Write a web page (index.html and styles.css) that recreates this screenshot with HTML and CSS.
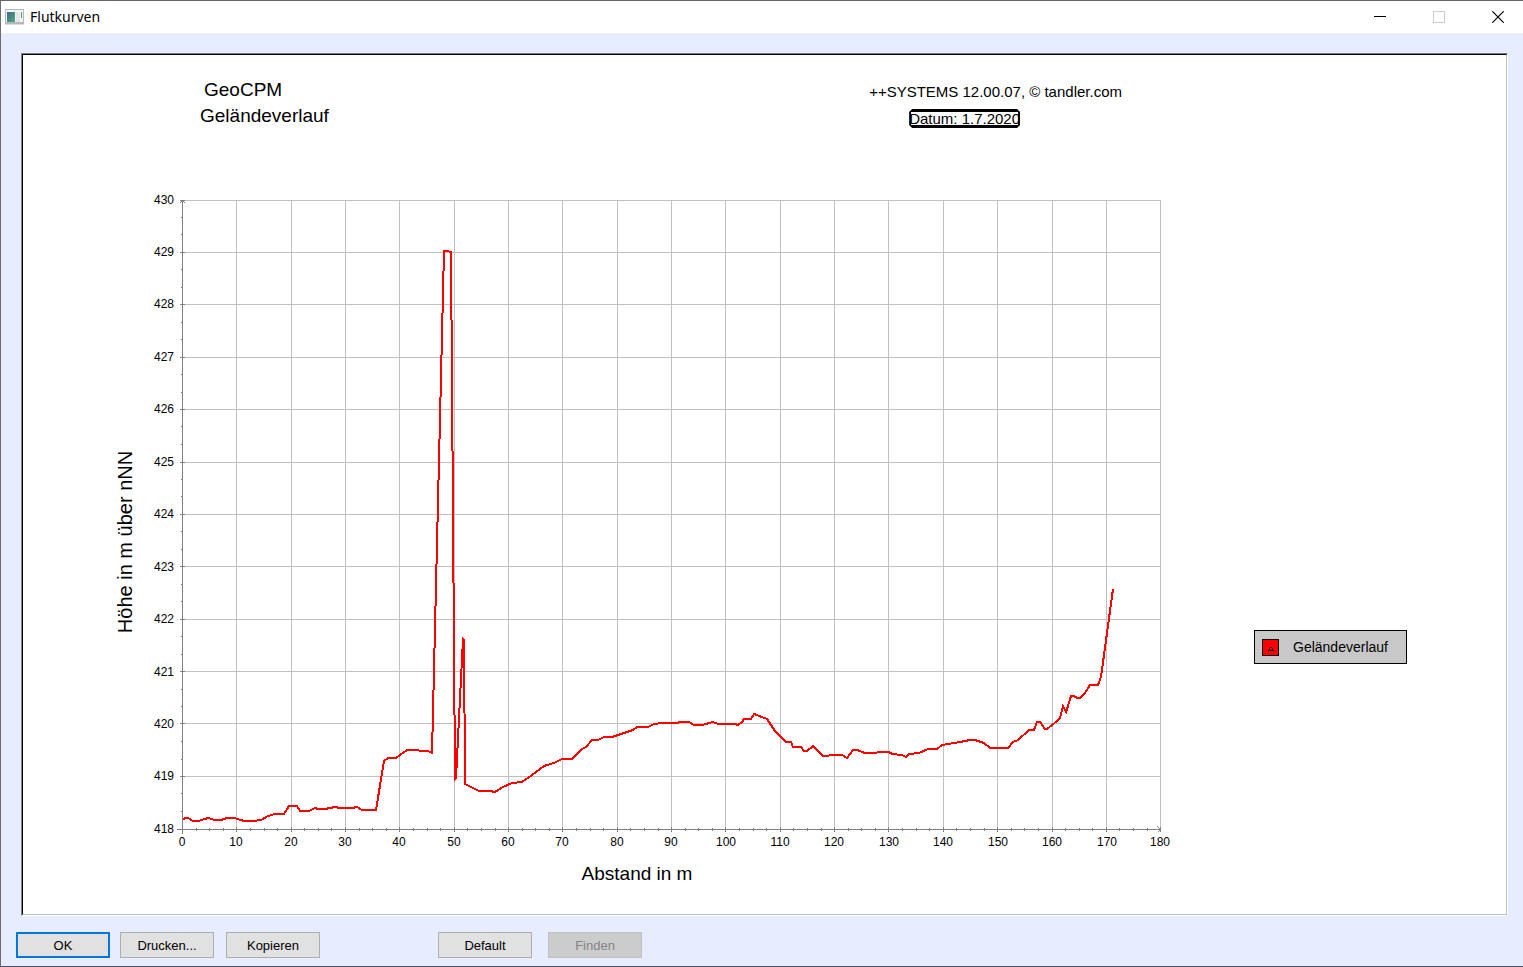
FILE: index.html
```html
<!DOCTYPE html>
<html lang="de">
<head>
<meta charset="utf-8">
<title>Flutkurven</title>
<link rel="stylesheet" href="styles.css">
</head>
<body>
<div class="window">
  <header class="titlebar">
    <svg class="app-icon" width="20" height="16" viewBox="0 0 20 16" aria-hidden="true">
      <defs>
        <linearGradient id="screen" x1="0" y1="0" x2="1" y2="1">
          <stop offset="0" stop-color="#3c6b94"/>
          <stop offset="1" stop-color="#4fa878"/>
        </linearGradient>
      </defs>
      <rect x="0" y="0" width="19" height="15" fill="#b4b8bd"/>
      <rect x="1" y="1" width="17" height="12" fill="#f4f5f6"/>
      <rect x="2" y="3" width="8" height="10" fill="url(#screen)"/>
      <rect x="11" y="3" width="4" height="10" fill="#e4e6e8"/>
      <rect x="16" y="3" width="1" height="6" fill="#4f9a80"/>
      <rect x="0" y="15" width="19" height="1" fill="#dcdcde"/>
    </svg>
    <h1 class="title">Flutkurven</h1>
    <div class="window-controls">
      <button class="control" type="button" aria-label="Minimieren">
        <svg width="12" height="12" viewBox="0 0 12 12"><rect x="0" y="5" width="12" height="1" fill="#000"/></svg>
      </button>
      <button class="control" type="button" aria-label="Maximieren" disabled>
        <svg width="12" height="12" viewBox="0 0 12 12"><rect x="0.5" y="0.5" width="11" height="11" fill="none" stroke="#ccc"/></svg>
      </button>
      <button class="control" type="button" aria-label="Schließen">
        <svg width="12" height="12" viewBox="0 0 12 12"><path d="M0.3 0.3 11.7 11.7M11.7 0.3 0.3 11.7" stroke="#000" stroke-width="1.2"/></svg>
      </button>
    </div>
  </header>

  <main class="paper">
    <div class="sheet">
      <div class="sheet-head">
        <div class="heading">
          <p class="product">GeoCPM</p>
          <h2 class="subject">Geländeverlauf</h2>
        </div>
        <div class="imprint">
          <p>++SYSTEMS 12.00.07, © tandler.com</p>
          <p class="date">Datum: 1.7.2020</p>
        </div>
      </div>
      <div class="sheet-body">
        <svg class="chart" viewBox="103 180 1087 710" role="img" aria-label="Geländeverlauf: Höhe über Abstand">
          <path class="grid" d="M183 200.5H1161M183 252.5H1161M183 304.5H1161M183 357.5H1161M183 409.5H1161M183 462.5H1161M183 514.5H1161M183 566.5H1161M183 619.5H1161M183 671.5H1161M183 723.5H1161M183 776.5H1161
            M236.5 200V829M291.5 200V829M345.5 200V829M399.5 200V829M454.5 200V829M508.5 200V829M562.5 200V829M617.5 200V829M671.5 200V829M725.5 200V829M780.5 200V829M834.5 200V829M888.5 200V829M943.5 200V829M997.5 200V829M1052.5 200V829M1106.5 200V829M1160.5 200V829"/>
          <path class="axis" d="M182.5 200V834M177 829.5H1161
            M180 200.5h5M180 252.5h5M180 304.5h5M180 357.5h5M180 409.5h5M180 462.5h5M180 514.5h5M180 566.5h5M180 619.5h5M180 671.5h5M180 723.5h5M180 776.5h5
            M181 217.5h2M181 234.5h2M181 269.5h2M181 287.5h2M181 322.5h2M181 339.5h2M181 374.5h2M181 392.5h2M181 426.5h2M181 444.5h2M181 479.5h2M181 496.5h2M181 531.5h2M181 549.5h2M181 584.5h2M181 601.5h2M181 636.5h2M181 654.5h2M181 689.5h2M181 706.5h2M181 741.5h2M181 759.5h2M181 793.5h2M181 811.5h2
            M236.5 827v5M291.5 827v5M345.5 827v5M399.5 827v5M454.5 827v5M508.5 827v5M562.5 827v5M617.5 827v5M671.5 827v5M725.5 827v5M780.5 827v5M834.5 827v5M888.5 827v5M943.5 827v5M997.5 827v5M1052.5 827v5M1106.5 827v5M1160.5 827v5
            M196.5 828v3M209.5 828v3M223.5 828v3M250.5 828v3M264.5 828v3M277.5 828v3M304.5 828v3M318.5 828v3M331.5 828v3M359.5 828v3M372.5 828v3M386.5 828v3M413.5 828v3M427.5 828v3M440.5 828v3M467.5 828v3M481.5 828v3M495.5 828v3M522.5 828v3M535.5 828v3M549.5 828v3M576.5 828v3M590.5 828v3M603.5 828v3M630.5 828v3M644.5 828v3M658.5 828v3M685.5 828v3M698.5 828v3M712.5 828v3M739.5 828v3M753.5 828v3M766.5 828v3M793.5 828v3M807.5 828v3M821.5 828v3M848.5 828v3M861.5 828v3M875.5 828v3M902.5 828v3M916.5 828v3M929.5 828v3M956.5 828v3M970.5 828v3M984.5 828v3M1011.5 828v3M1024.5 828v3M1038.5 828v3M1065.5 828v3M1079.5 828v3M1092.5 828v3M1119.5 828v3M1133.5 828v3M1147.5 828v3
            M179.5 203.5l3-3l3 3M1157.5 826.5l3 3l-3 3"/>
          <polyline class="curve" points="183,819 186,818 188,818 193,821 199,821 204,819 209,818 214,820 221,820 227,818 235,818 240,820 245,821 253,821 261,820 268,816 275,814 284,814 289,806 297,806 300,811 309,811 315,808 318,809 325,809 335,807 340,808 352,808 357,807 362,810 376,810 384,761 388,758 396,758 407,750 418,750 420,751 428,751 430,752 432,753 444,251 447,251 451,252 455,779 456,778 463,639 464,640 465,784 473,788 479,791 490,791 495,792 503,787 512,783 522,782 532,775 544,766 554,763 562,759 572,759 582,749 586,747 592,740 598,740 604,737 612,737 627,732 633,730 637,727 648,727 654,724 663,723 677,723 680,722 689,722 694,725 702,725 713,722 718,724 735,724 738,725 742,722 744,719 751,719 754,714 767,719 775,731 786,742 791,742 793,747 801,747 804,751 807,751 813,746 823,756 828,756 830,755 842,755 847,758 853,750 857,750 865,753 876,753 878,752 889,752 892,754 902,755 906,757 909,754 919,753 928,749 937,749 942,745 960,742 970,740 975,740 984,743 990,748 1008,748 1013,742 1018,740 1029,730 1034,730 1037,722 1040,722 1045,729 1047,729 1057,721 1060,718 1063,706 1066,712 1068,706 1071,696 1074,696 1077,698 1080,698 1085,693 1090,685 1098,685 1101,677 1113,589"/>
          <g class="labels labels-y">
            <text x="174" y="204">430</text><text x="174" y="256">429</text><text x="174" y="308">428</text><text x="174" y="361">427</text><text x="174" y="413">426</text><text x="174" y="466">425</text><text x="174" y="518">424</text><text x="174" y="571">423</text><text x="174" y="623">422</text><text x="174" y="676">421</text><text x="174" y="728">420</text><text x="174" y="780">419</text><text x="174" y="833">418</text>
          </g>
          <g class="labels labels-x">
            <text x="182" y="846">0</text><text x="236" y="846">10</text><text x="291" y="846">20</text><text x="345" y="846">30</text><text x="399" y="846">40</text><text x="454" y="846">50</text><text x="508" y="846">60</text><text x="562" y="846">70</text><text x="617" y="846">80</text><text x="671" y="846">90</text><text x="726" y="846">100</text><text x="780" y="846">110</text><text x="834" y="846">120</text><text x="889" y="846">130</text><text x="943" y="846">140</text><text x="998" y="846">150</text><text x="1052" y="846">160</text><text x="1107" y="846">170</text><text x="1160" y="846">180</text>
          </g>
          <text class="axis-title" x="637" y="880">Abstand in m</text>
          <text class="axis-title axis-title-y" transform="translate(132 542) rotate(-90)">Höhe in m über nNN</text>
        </svg>
        <div class="legend">
          <svg class="legend-key" width="17" height="17" viewBox="0 0 17 17" aria-hidden="true">
            <rect x="0.5" y="0.5" width="16" height="16" fill="#f00" stroke="#000"/>
            <path d="M6 11h6v1H6zM7 9h1v2H7zM10 9h1v2h-1zM8 8h2v1H8z" fill="#000"/>
          </svg>
          <span>Geländeverlauf</span>
        </div>
      </div>
    </div>
  </main>

  <footer class="actions">
    <button class="btn btn-primary" type="button">OK</button>
    <button class="btn" type="button">Drucken...</button>
    <button class="btn btn-copy" type="button">Kopieren</button>
    <button class="btn btn-default" type="button">Default</button>
    <button class="btn btn-find" type="button" disabled>Finden</button>
  </footer>
</div>
</body>
</html>
```

FILE: styles.css
```css
* {
  box-sizing: border-box;
}

body {
  margin: 0;
  font-family: "Liberation Sans", Arial, sans-serif;
  color: #000;
}

h1,
h2,
p {
  margin: 0;
  font-weight: 400;
}

.window {
  display: flex;
  flex-direction: column;
  min-height: 100vh;
  border-top: 1px solid #666;
  border-left: 1px solid #6c6c70;
  border-bottom: 1px solid #50506a;
  background: #e7edfe;
}

.titlebar {
  display: flex;
  align-items: center;
  height: 32px;
  padding-left: 4px;
  background: #fff;
}

.title {
  margin-left: 5px;
  font-family: "Noto Sans", sans-serif;
  font-size: 14px;
  line-height: 20px;
}

.window-controls {
  display: flex;
  gap: 9px;
  height: 100%;
  margin-left: auto;
}

.control {
  display: flex;
  align-items: center;
  justify-content: center;
  width: 50px;
  padding: 0;
  border: 0;
  background: transparent;
}

/* Sunken frame: dark on the top left, light on the bottom right */
.paper {
  display: flex;
  flex: 1;
  margin: 20px 15px 0 20px;
  border: 1px solid;
  border-color: #808080 #fff #fff #808080;
}

.sheet {
  flex: 1;
  border: 1px solid;
  border-color: #000 #c0c0c0 #c0c0c0 #000;
  background: #fff;
}

.sheet-head {
  display: flex;
  justify-content: space-between;
  height: 125px;
  padding: 22px 384px 0 177px;
}

.heading {
  font-size: 19px;
  line-height: 26px;
}

.product {
  padding-left: 4px;
}

.subject {
  font-size: 19px;
}

.imprint {
  padding-top: 1px;
  font-size: 15px;
  line-height: 27px;
}

.date {
  position: relative;
  width: max-content;
  margin-left: 40px;
}

/* Selection frame drawn over the text, with clipped corners */
.date::before {
  content: "";
  position: absolute;
  inset: 4px 0;
  border: solid #000;
  border-width: 3px 2px;
  clip-path: polygon(3px 0, calc(100% - 3px) 0, 100% 3px, 100% calc(100% - 3px), calc(100% - 3px) 100%, 3px 100%, 0 calc(100% - 3px), 0 3px);
}

.sheet-body {
  display: flex;
  align-items: flex-start;
  gap: 64px;
  padding: 0 99px 0 80px;
}

.chart {
  display: block;
  flex: 1;
  min-width: 0;
  height: auto;
}

.grid,
.axis,
.curve {
  fill: none;
  shape-rendering: crispEdges;
}

.grid {
  stroke: #c0c0c0;
}

.axis {
  stroke: #808080;
}

.curve {
  stroke: #f00;
  stroke-width: 2px;
}

.labels {
  font-size: 12px;
}

.labels-y {
  text-anchor: end;
}

.labels-x,
.axis-title {
  text-anchor: middle;
}

.axis-title {
  font-size: 19px;
}

.axis-title-y {
  font-size: 20px;
}

.legend {
  display: flex;
  flex: none;
  align-items: center;
  gap: 14px;
  width: 153px;
  height: 34px;
  margin-top: 450px;
  padding-left: 7px;
  border: 1px solid #000;
  background: #c8c8c8;
  font-size: 14px;
}

.actions {
  display: flex;
  gap: 10px;
  padding: 16px 15px 8px;
}

.btn {
  width: 94px;
  height: 26px;
  padding: 0;
  border: 1px solid #adadad;
  background: #e1e1e1;
  color: #000;
  font-family: inherit;
  font-size: 13px;
}

.btn-primary {
  border: 2px solid #0078d7;
}

.btn-copy {
  margin-left: 2px;
}

.btn-default {
  margin-left: 108px;
}

.btn-find {
  margin-left: 6px;
}

.btn:disabled {
  border-color: #bfbfbf;
  background: #ccc;
  color: #838383;
}
```
